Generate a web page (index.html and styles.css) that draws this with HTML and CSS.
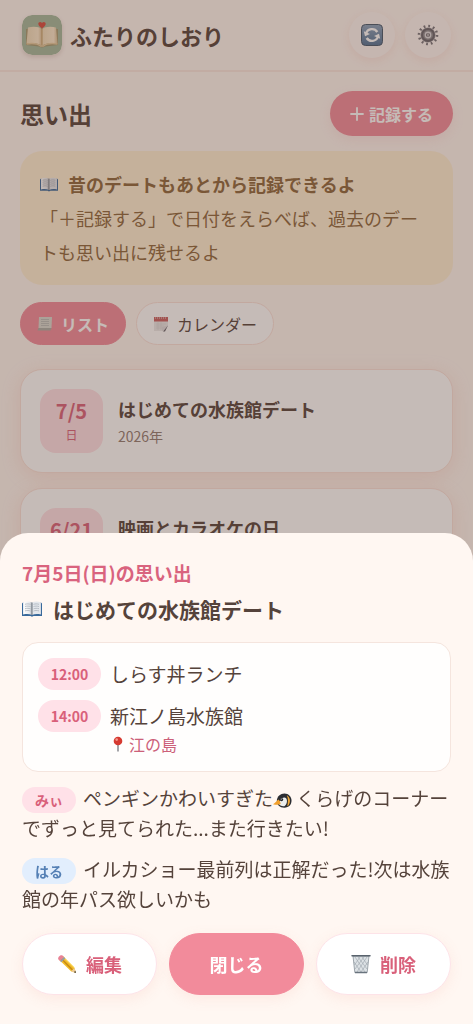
FILE: index.html
```html
<!DOCTYPE html>
<html lang="ja">
<head>
<meta charset="utf-8">
<meta name="viewport" content="width=device-width, initial-scale=1">
<title>ふたりのしおり</title>
<link rel="stylesheet" href="styles.css">
</head>
<body>
<svg class="defs" aria-hidden="true">
  <defs>
    <linearGradient id="page" x1="0" x2="1" y1="0" y2="0"><stop offset="0" stop-color="#fff"/><stop offset=".7" stop-color="#e9ebee"/><stop offset="1" stop-color="#b5b9c0"/></linearGradient>
    <linearGradient id="blue" x1="0" x2="0" y1="0" y2="1"><stop offset="0" stop-color="#8ba3bd"/><stop offset="1" stop-color="#4f7195"/></linearGradient>
    <linearGradient id="paper" x1="0" x2="1" y1="0" y2="0"><stop offset="0" stop-color="#f0dcba"/><stop offset=".75" stop-color="#fbe9cd"/><stop offset="1" stop-color="#d9bc91"/></linearGradient>
    <symbol id="book" viewBox="0 0 20 16">
      <path d="M0 2.500 1.500 1v12h17V1L20 2.500V15h-8.500l-1.500.8L8.500 15H0z" fill="#39699b"/>
      <path d="M1.200 1.200C4 .1 7.500.1 10 1.500V14C7.500 12.800 4 12.900 1.200 13.500z" fill="url(#page)"/>
      <path d="M18.800 1.200C16 .1 12.500.1 10 1.500V14c2.500-1.200 6-1.100 8.800-.5z" fill="#e4e7ec"/>
      <path d="M3 3.300c2-.6 4-.5 5.500.1M3 5.500c2-.6 4-.5 5.500.1M3 7.700c2-.6 4-.5 5.500.1M3 9.900c2-.6 4-.5 5.500.1M11.500 3.400c1.500-.6 3.500-.7 5.500-.1M11.500 5.600c1.500-.6 3.500-.7 5.500-.1M11.500 7.800c1.500-.6 3.500-.7 5.500-.1M11.500 10c1.500-.6 3.500-.7 5.500-.1" stroke="#a9b1bb" stroke-width=".8" fill="none"/>
      <path d="M10 1.500V14" stroke="#5c6571" stroke-width=".9"/>
    </symbol>
  </defs>
</svg>

<div class="app">
  <header class="topbar">
    <div class="brand">
      <svg class="logo" viewBox="0 0 40 40" aria-hidden="true">
        <rect width="40" height="40" rx="10" fill="#a3b99d"/>
        <path d="M4 30V14l16-1 16 1v16l-13 1.500q-3 2-6 0z" fill="#a8824e" opacity=".55"/>
        <path d="M4.500 28.500 6 12.500C11 11 17 11.500 20 14v16.500c-4-2.500-10-2.500-15.500-2z" fill="url(#paper)"/>
        <path d="M35.500 28.500 34 12.500C29 11 23 11.500 20 14v16.500c4-2.500 10-2.500 15.500-2z" fill="url(#paper)"/>
        <path d="M4.500 29c5-.7 11-.5 14 2h3c3-2.500 9-2.700 14-2" fill="none" stroke="#e6cb9e" stroke-width="1.500"/>
        <path d="M20 14v16" stroke="#c29d67" stroke-width="1"/>
        <path d="M20 13.500c-2-1.700-3.700-2.900-3.700-4.700 0-2 2.700-2.600 3.700-.8 1-1.800 3.700-1.200 3.700.8 0 1.800-1.700 3-3.700 4.700z" fill="#d84b3e"/>
      </svg>
      <h1 class="brand-name">ふたりのしおり</h1>
    </div>
    <div class="actions">
      <button class="round" type="button" aria-label="更新">
        <svg class="icon-refresh" viewBox="0 0 22 22" aria-hidden="true">
          <rect x=".5" y=".5" width="21" height="21" rx="4" fill="url(#blue)" stroke="#42566b"/>
          <path d="M5 9.500A6.300 6.300 0 0 1 16.300 8M17 12.500A6.300 6.300 0 0 1 5.700 14" fill="none" stroke="#fff" stroke-width="2.400"/>
          <path d="M2.800 7.200 4 12.300 9 10zM19.200 14.800 18 9.700 13 12z" fill="#fff"/>
        </svg>
      </button>
      <button class="round" type="button" aria-label="設定">
        <svg class="icon-gear" viewBox="0 0 22 22" aria-hidden="true">
          <circle cx="11" cy="11" r="9" fill="none" stroke="#77747b" stroke-width="2.600" stroke-dasharray="1.800 2.912"/>
          <circle cx="11" cy="11" r="7.600" fill="#a3a1a6"/>
          <circle cx="11" cy="11" r="6" fill="#8b898e" stroke="#66636a" stroke-width="2"/>
          <circle cx="11" cy="11" r="3.400" fill="#dddbdf"/>
          <circle cx="11" cy="11" r="2" fill="#69656c"/>
          <path d="M11 9.500v3" stroke="#eee" stroke-width="1"/>
        </svg>
      </button>
    </div>
  </header>

  <main class="content">
    <div class="heading">
      <h2 class="heading-title">思い出</h2>
      <button class="record" type="button">
        <svg class="icon-plus" viewBox="0 0 14 14" aria-hidden="true"><path d="M7 1v12M1 7h12" stroke="currentColor" stroke-width="1.800" stroke-linecap="round"/></svg>
        記録する
      </button>
    </div>

    <section class="hint">
      <p class="hint-title"><svg class="book-small" aria-hidden="true"><use href="#book"/></svg>昔のデートもあとから記録できるよ</p>
      <p>「＋記録する」で日付をえらべば、過去のデートも思い出に残せるよ</p>
    </section>

    <div class="tabs">
      <button class="tab tab-active" type="button" aria-pressed="true">
        <svg class="icon-tab" viewBox="0 0 16 16" aria-hidden="true">
          <path d="M2 1h13l-.5 11H1.500z" fill="#d8d9d2"/><path d="M1.500 12h13l-1 2.500H.5z" fill="#a9aca6"/>
          <path d="M4 3.500h8M4 5.500h8M4 7.500h8M4 9.500h8" stroke="#b4b8b5" stroke-width=".8"/>
        </svg>リスト</button>
      <button class="tab" type="button" aria-pressed="false">
        <svg class="icon-tab" viewBox="0 0 16 16" aria-hidden="true">
          <path d="M1 1h14v9l-4.500 5H1z" fill="#eceaea"/><path d="M1 1h14v4.500H1z" fill="#c95f60"/>
          <path d="M2 2h12" stroke="#eee" stroke-width=".8" stroke-dasharray="1 1"/>
          <path d="M3 8h10M3 10h8M3 12h6M5 6v8M8 6v8" stroke="#d2d0d2" stroke-width=".5"/>
          <path d="m15 9.500-6 1.500v4.500z" fill="#dedbdd"/><path d="m15 9.500-5 6h2z" fill="#65636b"/>
        </svg>カレンダー</button>
    </div>

    <div class="memories">
      <article class="memory">
        <div class="date"><b class="date-day">7/5</b><span class="date-week">日</span></div>
        <div><h3 class="memory-title">はじめての水族館デート</h3><p class="memory-year">2026年</p></div>
      </article>
      <article class="memory">
        <div class="date"><b class="date-day">6/21</b><span class="date-week">日</span></div>
        <div><h3 class="memory-title">映画とカラオケの日</h3><p class="memory-year">2026年</p></div>
      </article>
    </div>
  </main>
</div>

<div class="overlay">
  <section class="sheet" role="dialog" aria-modal="true" aria-labelledby="sheet-date">
    <h2 class="sheet-date" id="sheet-date">7月5日(日)の思い出</h2>
    <h3 class="sheet-title"><svg class="book-large" aria-hidden="true"><use href="#book"/></svg>はじめての水族館デート</h3>

    <ul class="plan">
      <li class="stop"><time class="time">12:00</time><div class="stop-name">しらす丼ランチ</div></li>
      <li class="stop"><time class="time">14:00</time>
        <div class="stop-name">新江ノ島水族館
          <div class="place">
            <svg class="icon-pin" viewBox="0 0 16 16" aria-hidden="true"><path d="M8 8v7.500" stroke="#74767d" stroke-width="1.300"/><circle cx="8" cy="5" r="4.300" fill="#d63a31"/><circle cx="6.700" cy="3.600" r="1.300" fill="#f59a8d"/></svg>江の島</div>
        </div>
      </li>
    </ul>

    <div class="comments">
      <p class="comment"><span class="person person-pink">みぃ</span>ペンギンかわいすぎた<svg class="penguin" viewBox="0 0 20 17" aria-hidden="true">
        <path d="M4 9C4 4 8 1 12 1c4.500 0 7.500 3.500 7.500 7.500 0 4.500-3 7.500-7.500 7.500-5 0-8-3-8-7z" fill="#2b2d32"/>
        <path d="M14.500 3c3.500 2 4.500 6.500 2 10.500l-1.500 1c1-4 1.200-8-.5-11.500z" fill="#f0a735"/>
        <path d="M8 8c1-2.500 4.500-3.500 6-1.500 1.500 2.500.5 6.500-2 8-2.500.5-5-.8-6-2.500z" fill="#eceeed"/>
        <circle cx="9" cy="7.500" r="1.700" fill="#24262a"/><circle cx="8.600" cy="7" r=".6" fill="#fff"/>
        <path d="M5.500 7.500C4 9.500 2 11 0 12.500c3 .8 6 .8 8-.2 0-2-.8-3.800-2.500-4.800z" fill="#f2a02c"/></svg> くらげのコーナーでずっと見てられた...また行きたい!</p>
      <p class="comment"><span class="person person-blue">はる</span>イルカショー最前列は正解だった!次は水族館の年パス欲しいかも</p>
    </div>

    <div class="buttons">
      <button class="button" type="button">
        <svg class="icon-button" viewBox="0 0 20 20" aria-hidden="true">
          <path d="m5.500 2 12 12 1.500 5-5-1.700L2.300 6z" fill="#f1bd29"/><path d="m4 4.300 11.700 11.800" stroke="#c98c15" stroke-width="1.500"/>
          <path d="m6 2.300 11.500 11.400" stroke="#ffe176" stroke-width="1"/>
          <path d="m14 17.300 3.500-3.300L19 19z" fill="#edca94"/><path d="m17 18.300 1.300-1.500.7 2.200z" fill="#333"/>
          <path d="M1.500 5.500C0 3.500 3.500 0 5.500 1.500L7 3 3 7z" fill="#e98295"/><path d="m3 7 4-4 1.300 1.300-4 4z" fill="#929baa"/>
        </svg>編集</button>
      <button class="button button-primary" type="button">閉じる</button>
      <button class="button" type="button">
        <svg class="icon-button" viewBox="0 0 20 20" aria-hidden="true">
          <path d="M2 2h16l-1.800 16.500H3.800z" fill="#dde2e5"/><path d="m4 3 10 15M7 3l9 12M11 3l5.500 8M3 8l7 10M16 3 6 18M13 3 4 15M9 3 3.500 11M17 8l-7 10" stroke="#9aa3ab" stroke-width=".6"/>
          <path d="M2 2h16l-1.800 16.500H3.800z" fill="none" stroke="#8a939b" stroke-width=".8"/>
          <path d="M1 1.800h18" stroke="#59636d" stroke-width="1.500" stroke-linecap="round"/><path d="M4 18.500h12" stroke="#68737d" stroke-width="1.500"/>
        </svg>削除</button>
    </div>
  </section>
</div>
</body>
</html>
```

FILE: styles.css
```css
* { box-sizing: border-box; }

html, body { height: 100%; }

body {
  margin: 0;
  overflow: hidden;
  background: #fff7f2;
  color: #55433b;
  font-family: "Noto Sans CJK JP", "Noto Sans", sans-serif;
}

h1, h2, h3, p, ul { margin: 0; padding: 0; }
ul { list-style: none; }
button { font: inherit; color: inherit; border: 0; }
svg { display: block; flex: none; }

.defs { position: absolute; width: 0; height: 0; }

.app { height: 100%; overflow: hidden; }

.topbar {
  display: flex;
  align-items: center;
  justify-content: space-between;
  padding: 12px 22px;
  border-bottom: 2px solid #fbe8e0;
}

.brand { display: flex; align-items: center; gap: 8px; }
.logo { width: 40px; height: 40px; border-radius: 10px; box-shadow: 0 2px 4px rgba(120, 80, 60, .2); }
.brand-name { font-size: 22px; line-height: 32px; }

.actions { display: flex; gap: 10px; }
.round {
  display: grid;
  place-items: center;
  width: 46px;
  height: 46px;
  padding: 0;
  border-radius: 50%;
  background: #fff8f5;
  box-shadow: 0 3px 10px rgba(240, 150, 130, .16);
}
.icon-refresh { width: 22px; height: 22px; }
.icon-gear { width: 22px; height: 22px; }

.content { padding: 19px 20px; }

.heading { display: flex; align-items: center; justify-content: space-between; }
.heading-title { font-size: 24px; line-height: 36px; }
.record {
  display: flex;
  align-items: center;
  gap: 5px;
  height: 45px;
  padding: 0 20px;
  border-radius: 24px;
  background: #f28b9b;
  color: #fff;
  font-size: 16px;
  font-weight: 700;
  box-shadow: 0 4px 12px rgba(242, 139, 155, .15);
}
.icon-plus { width: 14px; height: 14px; }

.hint {
  margin-top: 15px;
  padding: 16px 20px;
  border-radius: 22px;
  background: #fff0d5;
  color: #8d663b;
  font-size: 18px;
  line-height: 34px;
}
.hint-title { display: flex; align-items: center; gap: 10px; font-weight: 700; }
.book-small { width: 18px; height: 15px; }

.tabs { display: flex; gap: 10px; margin-top: 17px; }
.tab {
  display: flex;
  align-items: center;
  gap: 8px;
  height: 43px;
  padding: 0 16px;
  border: 1px solid #fbe2da;
  border-radius: 22px;
  background: #fff;
  font-size: 16px;
}
.tab-active { border-color: #f28b9b; background: #f28b9b; color: #fff; font-weight: 700; }
.icon-tab { width: 16px; height: 16px; }

.memories { display: grid; gap: 15px; margin-top: 24px; }
.memory {
  display: flex;
  align-items: center;
  gap: 15px;
  padding: 19px;
  border: 1px solid #fbe2da;
  border-radius: 22px;
  background: #fff;
  box-shadow: 0 4px 18px rgba(245, 170, 150, .25);
}
.date {
  display: flex;
  flex-direction: column;
  align-items: center;
  justify-content: center;
  width: 63px;
  height: 64px;
  border-radius: 16px;
  background: #ffe0e6;
  color: #d9607a;
}
.date-day { font-size: 20px; line-height: 28px; }
.date-week { font-size: 12px; line-height: 20px; }
.memory-title { font-size: 18px; line-height: 30px; }
.memory-year { color: #917b72; font-size: 14px; line-height: 24px; }

.overlay {
  position: fixed;
  inset: 0;
  display: flex;
  align-items: flex-end;
  background: rgba(90, 60, 50, .35);
}
.sheet {
  width: 100%;
  padding: 22px 22px 29px;
  border-radius: 28px 28px 0 0;
  background: #fff7f2;
}
.sheet-date { color: #d9637e; font-size: 19px; line-height: 36px; }
.sheet-title { display: flex; align-items: center; gap: 11px; font-size: 21px; line-height: 36px; }
.book-large { width: 20px; height: 16px; }

.plan {
  display: grid;
  gap: 10px;
  margin-top: 15px;
  padding: 15px;
  border: 1px solid #f5e5de;
  border-radius: 16px;
  background: #fffefd;
}
.stop { display: flex; align-items: flex-start; gap: 9px; }
.time {
  width: 63px;
  border-radius: 16px;
  background: #ffe1e8;
  color: #d9607a;
  font-size: 14px;
  font-weight: 700;
  line-height: 32px;
  text-align: center;
}
.stop-name { font-size: 19px; line-height: 32px; }
.place { display: flex; align-items: center; gap: 3px; color: #cc6079; font-size: 16px; line-height: 24px; }
.icon-pin { width: 16px; height: 16px; }

.comments { display: grid; gap: 12px; margin-top: 11px; }
.comment { font-size: 19px; line-height: 29px; }
.person {
  display: inline-block;
  width: 54px;
  margin-right: 7px;
  border-radius: 13px;
  font-size: 14px;
  font-weight: 700;
  line-height: 26px;
  text-align: center;
}
.person-pink { background: #ffe1e8; color: #d9607a; }
.person-blue { background: #e2eefd; color: #5580b5; }
.penguin { display: inline-block; width: 19px; height: 17px; vertical-align: -3px; }

.buttons { display: grid; grid-template-columns: repeat(3, 1fr); gap: 12px; margin-top: 20px; }
.button {
  display: flex;
  align-items: center;
  justify-content: center;
  gap: 9px;
  height: 62px;
  padding: 0;
  border: 1px solid #fde3e8;
  border-radius: 31px;
  background: #fff;
  color: #d9607a;
  font-size: 18px;
  font-weight: 700;
  box-shadow: 0 4px 14px rgba(242, 139, 125, .12);
}
.button-primary { border-color: #f28b9b; background: #f28b9b; color: #fff; }
.icon-button { width: 20px; height: 20px; }
```
